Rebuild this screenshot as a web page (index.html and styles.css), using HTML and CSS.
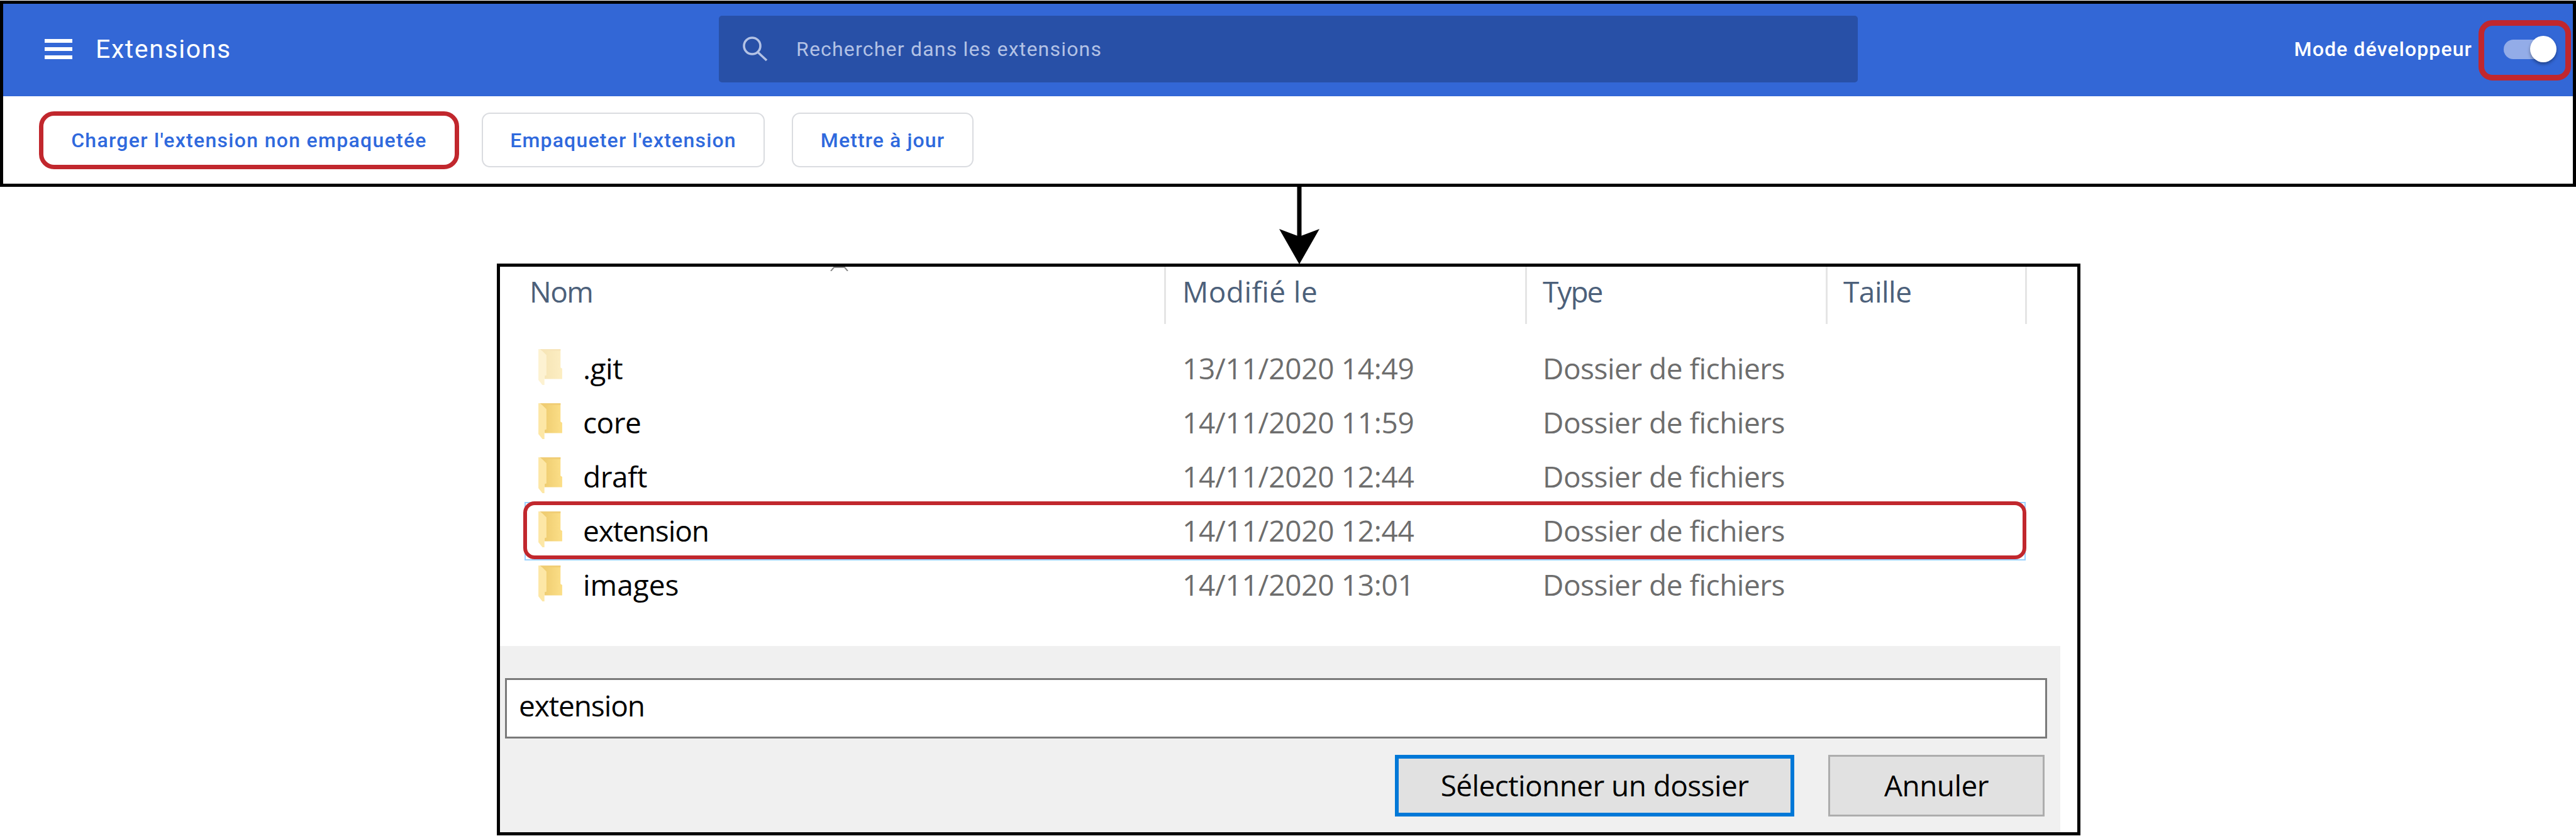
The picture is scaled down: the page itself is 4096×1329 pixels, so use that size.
FILE: index.html
```html
<!DOCTYPE html>
<html lang="fr">
<head>
<meta charset="utf-8">
<title>Extensions</title>
<link rel="stylesheet" href="styles.css">
</head>
<body>
<svg class="defs" width="0" height="0" aria-hidden="true">
  <defs>
    <linearGradient id="fold" x1="0" x2="1" y1="0" y2="0">
      <stop offset="0" stop-color="#ecc96c"/>
      <stop offset="1" stop-color="#fcdf88"/>
    </linearGradient>
    <symbol id="folder" viewBox="0 0 71 107">
      <path d="M5 0H66V55L71 58V89H18V30Z" fill="url(#fold)"/>
      <path d="M0 0H6L24 18V78L18 80V107H12L0 92Z" fill="#fde7a6"/>
      <path d="M5 0H66V5H11Z" fill="#f0cd75"/>
    </symbol>
  </defs>
</svg>
<div class="page">
  <section class="ext-frame">
    <header class="topbar">
      <div class="brand">
        <svg class="menu-icon" viewBox="0 0 44 32"><rect width="44" height="6" y="0"/><rect width="44" height="6" y="13"/><rect width="44" height="6" y="26"/></svg>
        <span class="brand-title">Extensions</span>
      </div>
      <div class="search">
        <svg class="search-icon" viewBox="0 0 40 40"><circle cx="15" cy="15" r="13"/><line x1="24" y1="25" x2="38" y2="38"/></svg>
        <span class="search-text">Rechercher dans les extensions</span>
      </div>
      <div class="dev">
        <span class="dev-label">Mode développeur</span>
        <div class="toggle">
          <span class="toggle-track"></span>
          <span class="toggle-knob"></span>
          <span class="toggle-mark"></span>
        </div>
      </div>
    </header>
    <div class="actions">
      <button class="btn btn-marked">Charger l'extension non empaquetée</button>
      <button class="btn btn-pack">Empaqueter l'extension</button>
      <button class="btn btn-update">Mettre à jour</button>
    </div>
  </section>

  <div class="connector">
    <svg class="arrow" viewBox="0 0 64 123">
      <rect x="28.5" y="0" width="7" height="90"/>
      <path d="M0 67L32 123L64 67L32 79Z"/>
    </svg>
  </div>

  <section class="dialog">
    <svg class="sort-mark" viewBox="0 0 29 7"><path d="M1 7L6 1H23L28 7"/></svg>
    <div class="list-head">
      <div class="head-cell head-name">Nom</div>
      <div class="head-cell head-date">Modifié le</div>
      <div class="head-cell head-type">Type</div>
      <div class="head-cell head-size">Taille</div>
    </div>
    <div class="list">
      <div class="row row-hidden">
        <div class="cell-name"><svg class="folder"><use href="#folder"/></svg><span>.git</span></div>
        <div class="cell-date">13/11/2020 14:49</div>
        <div class="cell-type">Dossier de fichiers</div>
      </div>
      <div class="row">
        <div class="cell-name"><svg class="folder"><use href="#folder"/></svg><span>core</span></div>
        <div class="cell-date">14/11/2020 11:59</div>
        <div class="cell-type">Dossier de fichiers</div>
      </div>
      <div class="row">
        <div class="cell-name"><svg class="folder"><use href="#folder"/></svg><span>draft</span></div>
        <div class="cell-date">14/11/2020 12:44</div>
        <div class="cell-type">Dossier de fichiers</div>
      </div>
      <div class="row row-selected">
        <div class="cell-name"><svg class="folder"><use href="#folder"/></svg><span class="name-tight">extension</span></div>
        <div class="cell-date">14/11/2020 12:44</div>
        <div class="cell-type">Dossier de fichiers</div>
        <span class="row-mark"></span>
      </div>
      <div class="row">
        <div class="cell-name"><svg class="folder"><use href="#folder"/></svg><span class="name-open">images</span></div>
        <div class="cell-date">14/11/2020 13:01</div>
        <div class="cell-type">Dossier de fichiers</div>
      </div>
    </div>
    <div class="footer">
      <div class="name-input">extension</div>
      <div class="footer-buttons">
        <button class="win-btn win-primary">Sélectionner un dossier</button>
        <button class="win-btn win-cancel">Annuler</button>
      </div>
    </div>
  </section>
</div>
</body>
</html>
```
FILE: styles.css
```css
* { box-sizing: border-box; }
html, body { margin: 0; padding: 0; background: #fff; }
.defs { position: absolute; }
.page { width: 4096px; height: 1329px; overflow: hidden; display: flex; flex-direction: column; padding-top: 1px; }

.ext-frame { height: 296px; border: 5px solid #000; display: flex; flex-direction: column; font-family: Roboto, sans-serif; flex: none; }
.topbar { height: 147px; padding-bottom: 4px; background: #3367d6; display: flex; align-items: center; flex: none; }
.brand { width: 1138px; display: flex; align-items: center; padding-left: 66px; flex: none; }
.menu-icon { width: 44px; height: 32px; fill: #fff; margin-right: 37px; }
.brand-title { font-size: 41px; letter-spacing: 1.6px; color: #fff; line-height: 48px; }
.search { width: 1811px; height: 106px; background: #2850a7; border-radius: 5px; display: flex; align-items: center; padding-left: 38px; flex: none; }
.search-icon { width: 40px; height: 40px; fill: none; stroke: #b3c2e5; stroke-width: 3.6; margin-right: 45px; }
.search-text { font-size: 32px; letter-spacing: 1.2px; color: #b3c2e5; }
.dev { flex: 1; display: flex; align-items: center; justify-content: flex-end; padding-right: 26px; }
.dev-label { font-size: 32px; font-weight: 500; letter-spacing: 1.1px; color: #fff; margin-right: 50px; }
.toggle { position: relative; width: 84px; height: 42px; }
.toggle-track { display: block; width: 73px; height: 31px; margin-top: 6px; background: #93ace8; border-radius: 16px; }
.toggle-knob { position: absolute; right: 0; top: 0; width: 42px; height: 42px; border-radius: 50%; background: #fff; box-shadow: 0 3px 5px rgba(0,0,0,.35); }
.toggle-mark { position: absolute; left: -40px; right: -23px; top: -25px; bottom: -29px; border: 9px solid #c1272d; border-radius: 22px; }

.actions { flex: 1; background: #fff; display: flex; align-items: center; padding-left: 57px; }
.btn { font-family: Roboto, sans-serif; font-size: 32px; font-weight: 500; letter-spacing: 1.2px; color: #2f69dd; background: #fff; border: 2px solid #dadce0; border-radius: 13px; height: 87px; padding: 0; }
.btn-marked { width: 668px; height: 92px; border: 7px solid #c1272d; border-radius: 24px; letter-spacing: 1.3px; }
.btn-pack { width: 450px; margin-left: 36px; }
.btn-update { width: 289px; margin-left: 43px; letter-spacing: 1.1px; }

.connector { height: 122px; flex: none; display: flex; padding-left: 2034px; }
.arrow { width: 64px; height: 123px; display: block; fill: #000; }

.dialog { position: relative; margin-left: 790px; width: 2518px; height: 909px; border: 5px solid #000; flex: none; font-family: "Open Sans", sans-serif; display: flex; flex-direction: column; background: #fff; }
.sort-mark { position: absolute; left: 525px; top: 0; width: 29px; height: 7px; fill: none; stroke: #8a8a8a; stroke-width: 2; }
.list-head, .row { display: grid; grid-template-columns: 1059px 574px 478px 317px; }
.list-head { height: 91px; flex: none; }
.head-cell { font-size: 46px; color: #4c607a; padding-left: 25px; border-right: 3px solid #e5e5e5; line-height: 78px; }
.head-name { padding-left: 47px; letter-spacing: -1.5px; }
.head-date { padding-left: 26px; letter-spacing: .4px; }
.head-type { letter-spacing: -2px; }
.head-size { letter-spacing: -.5px; }
.list { padding-top: 30px; height: 512px; flex: none; }
.row { height: 86px; align-items: center; position: relative; font-size: 46px; letter-spacing: -.5px; }
.cell-name { display: flex; align-items: center; padding-left: 61px; color: #000; }
.cell-name span { margin-left: 33px; padding-bottom: 7px; }
.cell-name .name-tight { letter-spacing: -1.1px; }
.cell-name .name-open { letter-spacing: 0; }
.folder { width: 38px; height: 57px; flex: none; margin-top: -10px; }
.row-hidden .folder { opacity: .5; }
.cell-date, .cell-type { color: #6d6d6d; padding-left: 26px; padding-bottom: 7px; }
.cell-date { letter-spacing: -.3px; }
.cell-type { padding-left: 25px; }
.row-selected::before { content: ""; position: absolute; left: 39px; top: -5px; width: 2383px; height: 89px; border: 2px solid #99d1ff; }
.row-mark { position: absolute; left: 37px; top: -6px; width: 2390px; height: 92px; border: 6px solid #c1272d; border-radius: 18px; }

.footer { flex: 1; margin-right: 27px; background: #f0f0f0; padding: 51px 21px 0 8px; display: flex; flex-direction: column; }
.name-input { height: 96px; border: 3px solid #7a7a7a; background: #fff; padding-left: 19px; font-size: 46px; letter-spacing: -1.1px; line-height: 80px; color: #000; }
.footer-buttons { display: flex; justify-content: flex-end; margin-top: 26px; padding-right: 4px; }
.win-btn { font-family: "Open Sans", sans-serif; font-size: 46px; letter-spacing: -.6px; color: #000; background: #e1e1e1; height: 98px; padding: 0 0 2px; }
.win-primary { width: 635px; border: 6px solid #0078d7; }
.win-cancel { width: 344px; margin-left: 54px; border: 3px solid #adadad; }
```
